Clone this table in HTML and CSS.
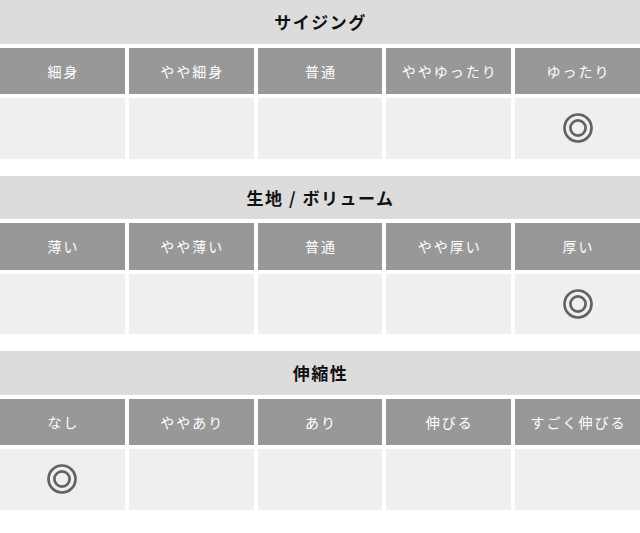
FILE: index.html
```html
<!DOCTYPE html>
<html lang="ja">
<head>
<meta charset="utf-8">
<link rel="stylesheet" href="styles.css">
</head>
<body>
<div class="page">
  <section class="spec">
    <h2 class="spec-title">サイジング</h2>
    <div class="row head">
      <div class="cell">細身</div>
      <div class="cell">やや細身</div>
      <div class="cell">普通</div>
      <div class="cell">ややゆったり</div>
      <div class="cell">ゆったり</div>
    </div>
    <div class="row data">
      <div class="cell"></div>
      <div class="cell"></div>
      <div class="cell"></div>
      <div class="cell"></div>
      <div class="cell"><svg class="mark" width="32" height="32" viewBox="0 0 32 32"><circle cx="16" cy="16" r="13.5"/><circle cx="16" cy="16" r="7.6"/></svg></div>
    </div>
  </section>
  <section class="spec">
    <h2 class="spec-title">生地 / ボリューム</h2>
    <div class="row head">
      <div class="cell">薄い</div>
      <div class="cell">やや薄い</div>
      <div class="cell">普通</div>
      <div class="cell">やや厚い</div>
      <div class="cell">厚い</div>
    </div>
    <div class="row data">
      <div class="cell"></div>
      <div class="cell"></div>
      <div class="cell"></div>
      <div class="cell"></div>
      <div class="cell"><svg class="mark" width="32" height="32" viewBox="0 0 32 32"><circle cx="16" cy="16" r="13.5"/><circle cx="16" cy="16" r="7.6"/></svg></div>
    </div>
  </section>
  <section class="spec">
    <h2 class="spec-title">伸縮性</h2>
    <div class="row head">
      <div class="cell">なし</div>
      <div class="cell">ややあり</div>
      <div class="cell">あり</div>
      <div class="cell">伸びる</div>
      <div class="cell">すごく伸びる</div>
    </div>
    <div class="row data">
      <div class="cell"><svg class="mark" width="32" height="32" viewBox="0 0 32 32"><circle cx="16" cy="16" r="13.5"/><circle cx="16" cy="16" r="7.6"/></svg></div>
      <div class="cell"></div>
      <div class="cell"></div>
      <div class="cell"></div>
      <div class="cell"></div>
    </div>
  </section>
</div>
</body>
</html>
```

FILE: styles.css
```css
html, body {
  margin: 0;
  padding: 0;
  background: #ffffff;
}
body {
  font-family: "Noto Sans CJK JP", "Noto Sans", sans-serif;
}
.page {
  display: flex;
  flex-direction: column;
  gap: 17px;
}
.spec {
  display: flex;
  flex-direction: column;
  gap: 4px;
}
.spec-title {
  margin: 0;
  height: 43.5px;
  background: #dcdcdc;
  color: #111111;
  font-size: 17px;
  font-weight: 700;
  letter-spacing: 1.5px;
  display: flex;
  align-items: center;
  justify-content: center;
  padding-left: 1px;
}
.row {
  display: grid;
  grid-template-columns: repeat(5, 1fr);
  gap: 4px;
}
.head .cell {
  height: 46.5px;
  background: #989898;
  color: #ffffff;
  font-size: 14px;
  font-weight: 400;
  letter-spacing: 2px;
  display: flex;
  align-items: center;
  justify-content: center;
  padding-left: 2px;
}
.data .cell {
  height: 60.5px;
  background: #efefef;
  display: flex;
  align-items: center;
  justify-content: center;
}
.mark circle {
  fill: none;
  stroke: #626262;
  stroke-width: 2.7;
}
```
